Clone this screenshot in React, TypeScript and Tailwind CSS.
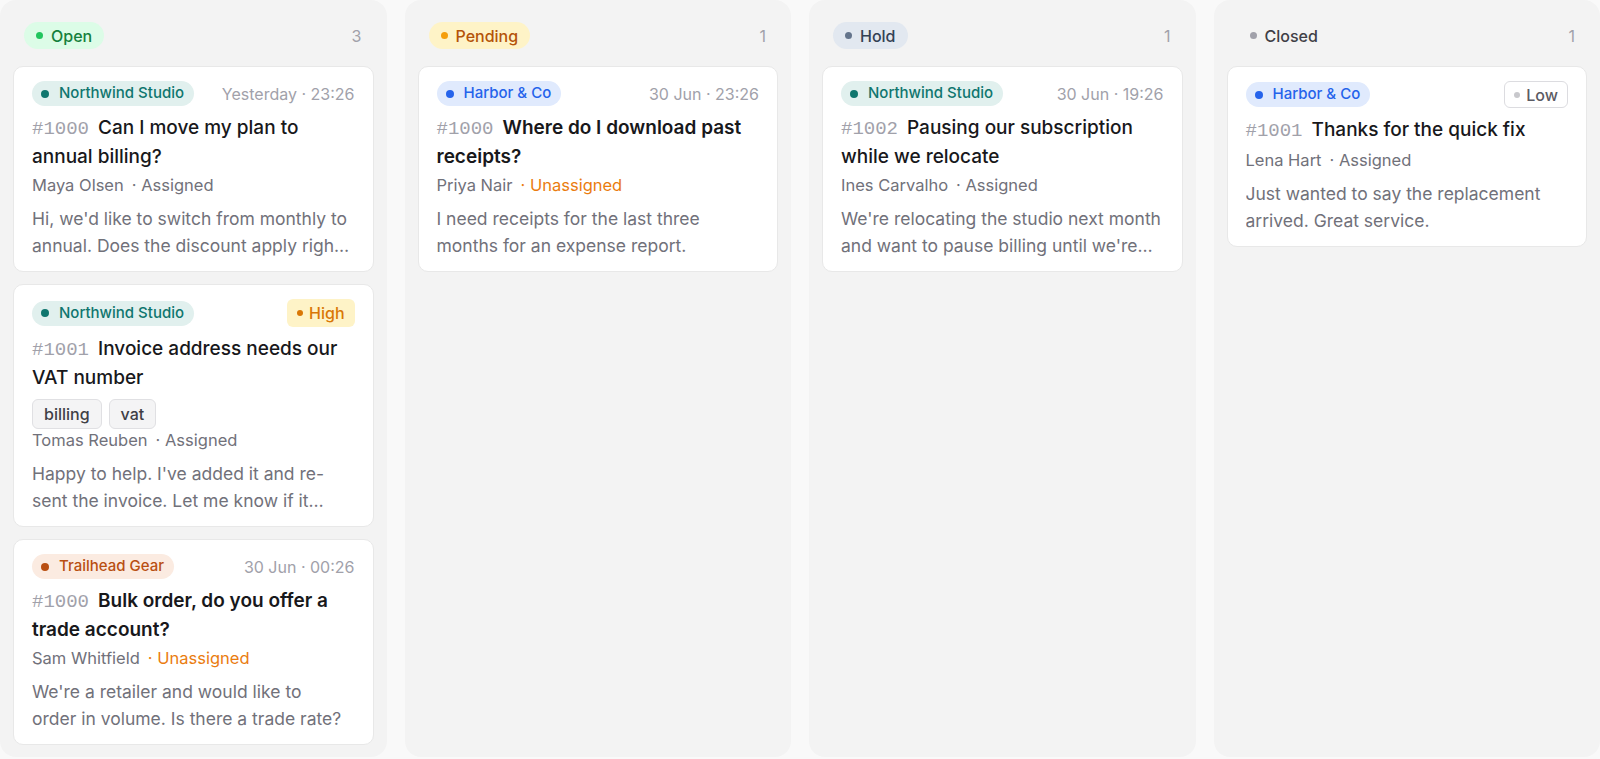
import React from 'react'

type Company = 'northwind' | 'harbor' | 'trailhead'

type Ticket = {
    id: string
    company: Company
    time?: string
    priority?: 'High' | 'Low'
    title: string
    tags?: string[]
    customer: string
    assigned: boolean
    preview: string
}

type Column = {
    label: string
    count: number
    pill: string
    dot: string
    tickets: Ticket[]
}

const companies: Record<Company, { name: string; pill: string; dot: string }> = {
    northwind: { name: 'Northwind Studio', pill: 'bg-[#e1f0ee] text-[#0f766e]', dot: 'bg-[#0f766e]' },
    harbor: { name: 'Harbor & Co', pill: 'bg-[#e0eafd] text-[#2563eb]', dot: 'bg-[#2563eb]' },
    trailhead: { name: 'Trailhead Gear', pill: 'bg-[#fbebe1] text-[#b94f12]', dot: 'bg-[#b94f12]' },
}

const columns: Column[] = [
    {
        label: 'Open',
        count: 3,
        pill: 'bg-[#dcfce7] text-[#15803d]',
        dot: 'bg-[#22c55e]',
        tickets: [
            {
                id: '#1000',
                company: 'northwind',
                time: 'Yesterday · 23:26',
                title: 'Can I move my plan to annual billing?',
                customer: 'Maya Olsen',
                assigned: true,
                preview: "Hi, we'd like to switch from monthly to annual. Does the discount apply right away?",
            },
            {
                id: '#1001',
                company: 'northwind',
                priority: 'High',
                title: 'Invoice address needs our VAT number',
                tags: ['billing', 'vat'],
                customer: 'Tomas Reuben',
                assigned: true,
                preview: "Happy to help. I've added it and re-sent the invoice. Let me know if it looks right.",
            },
            {
                id: '#1000',
                company: 'trailhead',
                time: '30 Jun · 00:26',
                title: 'Bulk order, do you offer a trade account?',
                customer: 'Sam Whitfield',
                assigned: false,
                // keep "order in" together
                preview: "We're a retailer and would like to order\u00a0in volume. Is there a trade rate?",
            },
        ],
    },
    {
        label: 'Pending',
        count: 1,
        pill: 'bg-[#fef3c7] text-[#b45309]',
        dot: 'bg-[#f59e0b]',
        tickets: [
            {
                id: '#1000',
                company: 'harbor',
                time: '30 Jun · 23:26',
                title: 'Where do I download past receipts?',
                customer: 'Priya Nair',
                assigned: false,
                preview: 'I need receipts for the last three months for an expense report.',
            },
        ],
    },
    {
        label: 'Hold',
        count: 1,
        pill: 'bg-[#e2e8f0] text-[#334155]',
        dot: 'bg-[#64748b]',
        tickets: [
            {
                id: '#1002',
                company: 'northwind',
                time: '30 Jun · 19:26',
                title: 'Pausing our subscription while we relocate',
                customer: 'Ines Carvalho',
                assigned: true,
                preview: "We're relocating the studio next month and want to pause billing until we're settled.",
            },
        ],
    },
    {
        label: 'Closed',
        count: 1,
        pill: 'text-[#3f3f46]',
        dot: 'bg-[#a1a1aa]',
        tickets: [
            {
                id: '#1001',
                company: 'harbor',
                priority: 'Low',
                title: 'Thanks for the quick fix',
                customer: 'Lena Hart',
                assigned: true,
                preview: 'Just wanted to say the replacement arrived. Great service.',
            },
        ],
    },
]

function PriorityBadge({ level }: { level: 'High' | 'Low' }) {
    if (level === 'High') {
        return (
            <span className="flex h-[28px] items-center gap-[6px] rounded-md bg-[#fef3c7] px-[10px] text-[16px] font-[550] text-[#d97706]">
                <span className="h-[6px] w-[6px] rounded-full bg-[#d97706]" />
                High
            </span>
        )
    }
    return (
        <span className="flex h-[27px] items-center gap-[6px] rounded-md border-[1.5px] border-[#dcdce0] bg-white px-[9px] text-[16px] font-[550] text-[#5b5b63]">
            <span className="h-[6px] w-[6px] rounded-full bg-[#c8c8cc]" />
            Low
        </span>
    )
}

function TicketCard({ ticket }: { ticket: Ticket }) {
    const company = companies[ticket.company]

    return (
        <div className="rounded-[10px] border border-[#e8e8e8] bg-white px-[18px] pt-[14px] pb-[12px]">
            <div className="flex items-center justify-between">
                <span className={`flex h-[25px] items-center gap-[10px] rounded-full pl-[9px] pr-[10px] text-[15px] font-[450] ${company.pill}`}>
                    <span className={`h-[8px] w-[8px] rounded-full ${company.dot}`} />
                    {company.name}
                </span>
                {ticket.priority ? (
                    <PriorityBadge level={ticket.priority} />
                ) : (
                    <span className="text-[16px] leading-[22px] text-[#a1a1aa]">{ticket.time}</span>
                )}
            </div>

            <p className={`mt-[8px] text-[19px] leading-[27px] text-[#18181b] ${ticket.assigned ? 'font-[450]' : 'font-[600]'}`}>
                <span className="mr-[9px] font-['Liberation_Mono',monospace] font-normal text-[#a1a1aa]">{ticket.id}</span>
                {ticket.title}
            </p>

            {ticket.tags && (
                <div className="mt-[8px] flex gap-[7px]">
                    {ticket.tags.map((tag) => (
                        <span
                            key={tag}
                            className="flex h-[30px] items-center rounded-md border border-[#e0e0e3] bg-[#f4f4f5] px-[11px] text-[16px] font-[450] text-[#3f3f46]"
                        >
                            {tag}
                        </span>
                    ))}
                </div>
            )}

            <p className={`${ticket.tags ? 'mt-0' : 'mt-1'} text-[16.5px] leading-[22px] text-[#71717a]`}>
                {ticket.customer}
                <span className={`ml-[8px] ${ticket.assigned ? '' : 'text-[#ea7c0f]'}`}>· {ticket.assigned ? 'Assigned' : 'Unassigned'}</span>
            </p>

            <p className="mt-[9px] line-clamp-2 text-[17.5px] leading-[27px] text-[#71717a]">{ticket.preview}</p>
        </div>
    )
}

function BoardColumn({ column }: { column: Column }) {
    return (
        <div className="h-[757px] rounded-2xl bg-[#f3f3f3] px-[13px] pt-[22px]">
            <div className="mb-[17px] flex h-[27px] items-center justify-between pl-[11px] pr-[12px]">
                <span className={`flex h-[27px] items-center gap-2 rounded-full px-3 text-[16px] font-[450] ${column.pill}`}>
                    <span className={`h-[7px] w-[7px] rounded-full ${column.dot}`} />
                    {column.label}
                </span>
                <span className="text-[16px] text-[#a1a1aa]">{column.count}</span>
            </div>
            <div className="flex flex-col gap-3">
                {column.tickets.map((ticket, index) => (
                    <TicketCard key={index} ticket={ticket} />
                ))}
            </div>
        </div>
    )
}

export default function App() {
    return (
        <main className="min-h-screen bg-[#f9f9f9] font-['Inter',sans-serif]">
            <div className="grid grid-cols-4 gap-[18px]">
                {columns.map((column) => (
                    <BoardColumn key={column.label} column={column} />
                ))}
            </div>
        </main>
    )
}
